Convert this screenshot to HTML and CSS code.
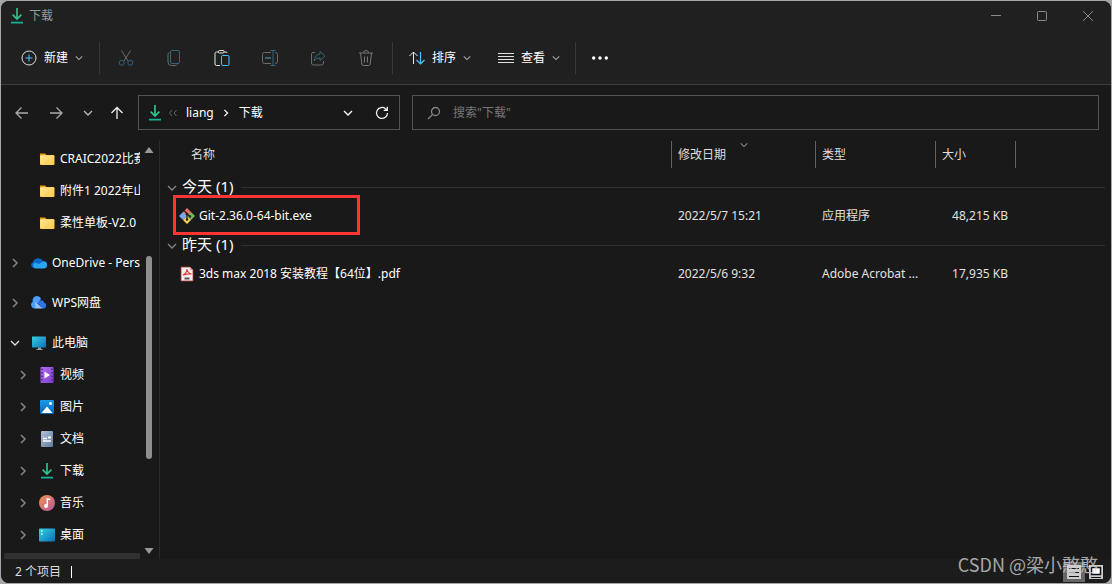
FILE: index.html
```html
<!DOCTYPE html>
<html lang="zh-CN">
<head>
<meta charset="utf-8">
<title>下载</title>
<link rel="stylesheet" href="styles.css">
</head>
<body>
<svg class="defs" aria-hidden="true">
  <defs>
    <linearGradient id="gold" x1="0" y1="0" x2="1" y2="1"><stop offset="0" stop-color="#ffe79c"/><stop offset="1" stop-color="#ffc843"/></linearGradient>
    <linearGradient id="screen" x1="0" y1="0" x2="1" y2="1"><stop offset="0" stop-color="#35d3e0"/><stop offset="1" stop-color="#0a6fb8"/></linearGradient>
    <linearGradient id="violet" x1="0" y1="0" x2="1" y2="1"><stop offset="0" stop-color="#b56cf0"/><stop offset="1" stop-color="#7d3fd0"/></linearGradient>
    <linearGradient id="sky" x1="0" y1="0" x2="0" y2="1"><stop offset="0" stop-color="#1c9be8"/><stop offset="1" stop-color="#0568b8"/></linearGradient>
    <linearGradient id="steel" x1="0" y1="0" x2="1" y2="1"><stop offset="0" stop-color="#b4c3d6"/><stop offset="1" stop-color="#5d7c9f"/></linearGradient>
    <linearGradient id="tune" x1="0" y1="0" x2="1" y2="1"><stop offset="0" stop-color="#f5924f"/><stop offset="1" stop-color="#b0589f"/></linearGradient>
    <symbol id="download" viewBox="0 0 16 16"><path d="M8 0v10.500M3.600 6.600 8 11l4.400-4.400" fill="none" stroke="#2fc08b" stroke-width="1.700"/><path d="M2 14.600h12" stroke="#19b093" stroke-width="1.800"/></symbol>
    <symbol id="folder" viewBox="0 0 16 16"><path d="M1 2.500h5l1.500 1.500H15v4H1z" fill="#e9a00c"/><rect x="1" y="4.300" width="14.500" height="9.700" rx="1" fill="url(#gold)"/></symbol>
    <symbol id="right" viewBox="0 0 10 10"><path d="m3 1 4 4-4 4" fill="none" stroke="currentColor" stroke-width="1.500"/></symbol>
    <symbol id="down" viewBox="0 0 10 10"><path d="m1 3 4 4 4-4" fill="none" stroke="currentColor" stroke-width="1.300"/></symbol>
  </defs>
</svg>
<div class="window">
  <header class="titlebar">
    <svg class="icon"><use href="#download"/></svg>
    <span class="title">下载</span>
    <button class="caption" aria-label="最小化"><svg class="tiny" viewBox="0 0 10 10"><path d="M0 4.500h10" stroke="currentColor"/></svg></button>
    <button class="caption" aria-label="最大化"><svg class="tiny" viewBox="0 0 10 10"><rect x=".5" y=".5" width="9" height="9" rx=".8" fill="none" stroke="currentColor"/></svg></button>
    <button class="caption" aria-label="关闭"><svg class="tiny" viewBox="0 0 10 10"><path d="m0 0 10 10M10 0 0 10" stroke="currentColor"/></svg></button>
  </header>

  <div class="toolbar">
    <button class="command">
      <svg class="icon" viewBox="0 0 16 16" fill="none"><circle cx="8" cy="8" r="7" stroke="#ddd"/><path d="M8 4.500v7M4.500 8h7" stroke="#4cc2ff"/></svg>
      新建<svg class="mini"><use href="#down"/></svg>
    </button>
    <div class="tools">
      <button class="tool" aria-label="剪切"><svg class="icon" viewBox="0 0 16 16" fill="none"><path d="m3.500.5 6.500 10.500M12.500.5 6 11" stroke="#6b6b6b"/><circle cx="3.700" cy="12.800" r="2.500" stroke="#35657d"/><circle cx="12.300" cy="12.800" r="2.500" stroke="#35657d"/></svg></button>
      <button class="tool" aria-label="复制"><svg class="icon" viewBox="0 0 16 16" fill="none"><path d="M3.500 2.500q-1.500.5-1.500 2V12q0 3.500 3.500 3.500h3.500q1.500 0 2-1" stroke="#6b6b6b"/><rect x="4.500" y=".5" width="9" height="13" rx="1.500" stroke="#35657d"/></svg></button>
      <button class="tool" aria-label="粘贴"><svg class="icon" viewBox="0 0 16 16" fill="none"><path d="M4.500 2H2.500q-1.500 0-1.500 1.500v10.500q0 1.500 1.500 1.500H6M10 2h2q1 0 1 1" stroke="#e8e8e8"/><rect x="4.500" y=".5" width="5.500" height="2.500" rx="1" stroke="#e8e8e8"/><rect x="7.500" y="5.500" width="7.500" height="10" rx="1.200" stroke="#4cc2ff"/></svg></button>
      <button class="tool" aria-label="重命名"><svg class="icon" viewBox="0 0 16 16" fill="none"><path d="M9 2.500H2.500Q.5 2.500.5 4.500v7q0 2 2 2H9M13 2.500h.5q2 0 2 2v7q0 2-2 2H13" stroke="#6b6b6b"/><path d="M11 .5v15M8.500.5h5M8.500 15.500h5" stroke="#35657d"/><path d="M3 8h6" stroke="#35657d" stroke-width="1.800"/></svg></button>
      <button class="tool" aria-label="共享"><svg class="icon" viewBox="0 0 16 16" fill="none"><path d="M5 2.500H3q-1.500 0-1.500 1.500v9q0 2 2 2h8q2 0 2-2v-2" stroke="#6b6b6b"/><path d="m10 1.500 5 4.500-5 4.500V8Q6.500 7.500 4 11q.5-6 6-7z" stroke="#35657d"/></svg></button>
      <button class="tool" aria-label="删除"><svg class="icon" viewBox="0 0 16 16" fill="none" stroke="#777"><path d="M1 3h14M5.500 2.500q0-2 2.500-2t2.500 2M2.500 3l1.300 11q.2 1.500 1.700 1.500h5q1.500 0 1.700-1.500L13.500 3M6.500 6.500v6M9.500 6.500v6"/></svg></button>
    </div>
    <div class="views">
      <button class="command"><svg class="icon" viewBox="0 0 16 16" fill="none"><path d="M4.500 14V2M.5 6l4-4 4 4" stroke="#e8e8e8"/><path d="M11.500 2v12M7.500 10l4 4 4-4" stroke="#4cc2ff" stroke-width="1.200"/></svg>排序<svg class="mini"><use href="#down"/></svg></button>
      <button class="command"><svg class="icon" viewBox="0 0 16 16"><path d="M0 3.500h16M0 6.500h16M0 9.500h16M0 12.500h16" stroke="#e0e0e0"/></svg>查看<svg class="mini"><use href="#down"/></svg></button>
    </div>
    <button class="tool more" aria-label="更多"><svg class="icon" viewBox="0 0 16 16" fill="#fff"><circle cx="1.700" cy="8" r="1.700"/><circle cx="8" cy="8" r="1.700"/><circle cx="14.300" cy="8" r="1.700"/></svg></button>
  </div>

  <div class="navbar">
    <div class="history">
      <button aria-label="后退"><svg class="arrow dim" viewBox="0 0 14 14"><path d="M13 7H1.500M6.500 1.500 1 7l5.500 5.500"/></svg></button>
      <button aria-label="前进"><svg class="arrow dim" viewBox="0 0 14 14"><path d="M1 7h11.500M7.500 1.500 13 7l-5.500 5.500"/></svg></button>
      <button class="narrow" aria-label="最近"><svg class="tiny"><use href="#down"/></svg></button>
      <button class="narrow" aria-label="上移"><svg class="arrow" viewBox="0 0 14 14"><path d="M7 13V1.500M1.500 7 7 1.500 12.500 7"/></svg></button>
    </div>
    <div class="address">
      <svg class="icon"><use href="#download"/></svg>
      <svg class="chevrons" viewBox="0 0 10 10"><path d="M4 2 1.500 5 4 8M8.500 2 6 5l2.500 3" fill="none" stroke="#666"/></svg>
      <a href="#liang">liang</a>
      <svg class="crumb"><use href="#right"/></svg>
      <a href="#downloads">下载</a>
      <button class="expand" aria-label="展开"><svg class="tiny"><use href="#down"/></svg></button>
      <button aria-label="刷新"><svg class="arrow" viewBox="0 0 14 14"><path d="M12.500 7A5.500 5.500 0 1 1 10.500 2.700L12 4.200M12.300.7v3.600H8.700"/></svg></button>
    </div>
    <label class="search">
      <svg class="arrow" viewBox="0 0 14 14"><circle cx="8.500" cy="5.500" r="4"/><path d="M5.500 8.500 1 13"/></svg>
      <input type="text" aria-label="搜索" placeholder='搜索"下载"'>
    </label>
  </div>

  <div class="body">
    <nav class="sidebar">
      <ul class="tree">
        <li class="child leaf"><svg class="icon"><use href="#folder"/></svg><span>CRAIC2022比赛</span></li>
        <li class="child leaf"><svg class="icon"><use href="#folder"/></svg><span>附件1 2022年山东</span></li>
        <li class="child leaf"><svg class="icon"><use href="#folder"/></svg><span>柔性单板-V2.0</span></li>
        <li class="root"><svg class="twist"><use href="#right"/></svg><svg class="icon" viewBox="0 0 16 16"><path d="M3 13a3 3 0 0 1-1-5.800A5.500 5.500 0 0 1 12 6a3.500 3.500 0 0 1 1 7z" fill="#0a66c8"/><path d="M4 13.500a3.300 3.300 0 0 1 0-6L8 9l4-2.500a3.500 3.500 0 0 1 1 7z" fill="#2aa5f2"/></svg><span>OneDrive - Personal</span></li>
        <li class="root"><svg class="twist"><use href="#right"/></svg><svg class="icon" viewBox="0 0 16 16"><path d="M3.500 13.500A3.700 3.700 0 0 1 1.800 6.700 4.300 4.300 0 0 1 10 4l-4 5-1 4.500z" fill="#4b9fff"/><path d="M4 6.500 12 13.500H4.500z" fill="#8dc4ff"/><path d="M6.500 8Q8.500 4.500 11.500 5.500a3.500 3.500 0 0 1 1.500 2 3.300 3.300 0 0 1 .5 6H12z" fill="#2c75ec"/></svg><span>WPS网盘</span></li>
        <li class="root"><svg class="twist open"><use href="#down"/></svg><svg class="icon" viewBox="0 0 16 16"><rect x="1" y="1.500" width="14" height="11" rx=".6" fill="url(#screen)"/><path d="M7 12.500h3v1.500h1.500v1h-6v-1H7z" fill="#9aa0a6"/></svg><span>此电脑</span></li>
        <li class="child"><svg class="twist"><use href="#right"/></svg><svg class="icon" viewBox="0 0 16 16"><rect x="1.500" width="13" height="16" rx="1" fill="url(#violet)"/><path d="M3 1.500v14M13 1.500v14" stroke="#4e2590" stroke-width="1.500" stroke-dasharray="1.500 2"/><path d="M5.500 4.500 11 8l-5.500 3.500z" fill="#fff"/></svg><span>视频</span></li>
        <li class="child"><svg class="twist"><use href="#right"/></svg><svg class="icon" viewBox="0 0 16 16"><rect x="1" y="1" width="14" height="14" rx="1" fill="url(#sky)"/><path d="M2.500 14 8 7.500l5.500 6.500z" fill="#fff"/><circle cx="11.500" cy="4.500" r="1.500" fill="#fff"/></svg><span>图片</span></li>
        <li class="child"><svg class="twist"><use href="#right"/></svg><svg class="icon" viewBox="0 0 16 16"><rect x="2" width="12" height="16" rx="1" fill="url(#steel)"/><path d="M4 7.500h4M4 10h8" stroke="#fff" stroke-width="1.300"/><path d="M9 5.500h3v2H9z" fill="#fff"/></svg><span>文档</span></li>
        <li class="child"><svg class="twist"><use href="#right"/></svg><svg class="icon"><use href="#download"/></svg><span>下载</span></li>
        <li class="child"><svg class="twist"><use href="#right"/></svg><svg class="icon" viewBox="0 0 16 16"><circle cx="8" cy="8" r="8" fill="url(#tune)"/><path d="M8.300 10.500V4l3 .5" fill="none" stroke="#fff" stroke-width="1.500"/><circle cx="7" cy="11" r="2" fill="#fff"/></svg><span>音乐</span></li>
        <li class="child"><svg class="twist"><use href="#right"/></svg><svg class="icon" viewBox="0 0 16 16"><rect y="1.500" width="16" height="13" rx=".8" fill="url(#screen)"/><path d="M2 4h1.500M2 7h1.500" stroke="#dff" stroke-width="1.500"/></svg><span>桌面</span></li>
        <li class="active"><svg class="icon" viewBox="0 0 16 16"><path d="M0 0h2.500v3H0zM3.500 0H6v3H3.500zM0 4h16v8H0z" fill="#2595d0"/></svg></li>
      </ul>
      <div class="scrollbar">
        <svg class="tiny" viewBox="0 0 10 10"><path d="m5 2 4.500 6h-9z"/></svg>
        <div class="track"><div class="thumb"></div></div>
        <svg class="tiny" viewBox="0 0 10 10"><path d="M5 8 .5 2h9z"/></svg>
      </div>
    </nav>

    <main class="files">
      <table>
        <colgroup><col class="c-name"><col class="c-date"><col class="c-type"><col class="c-size"><col></colgroup>
        <thead>
          <tr><th class="name">名称</th><th>修改日期<svg class="sort"><use href="#down"/></svg></th><th>类型</th><th>大小</th><td></td></tr>
        </thead>
        <tbody>
          <tr><th colspan="5"><div class="group"><svg class="twist"><use href="#down"/></svg><span>今天 (1)</span></div></th></tr>
          <tr>
            <td><div class="file marked"><svg class="icon" viewBox="0 0 16 16"><path d="M8 0 3.800 4.200 8 8.400l4.200-4.200z" fill="#ef6b6b"/><path d="M4 4 0 8l4 4 4-4z" fill="#78a8f0"/><path d="m12 4 4 4-4 4-4-4z" fill="#75bd53"/><path d="m8 8 4 4-4 4-4-4z" fill="#f2d45c"/><path d="m5 2.500 3 3v6M8 6l3 2.500" fill="none" stroke="#222" stroke-width="1.300"/><circle cx="8" cy="6" r="1.300" fill="#222"/><circle cx="11" cy="8.500" r="1.300" fill="#222"/><circle cx="8" cy="11.500" r="1.300" fill="#222"/></svg>Git-2.36.0-64-bit.exe</div></td>
            <td>2022/5/7 15:21</td><td>应用程序</td><td class="size">48,215 KB</td><td></td>
          </tr>
          <tr><th colspan="5"><div class="group"><svg class="twist"><use href="#down"/></svg><span>昨天 (1)</span></div></th></tr>
          <tr>
            <td><div class="file"><svg class="icon" viewBox="0 0 16 16"><path d="M2 1h9l3 3v11H2z" fill="#f4eeee" stroke="#a33" stroke-width=".8"/><path d="M11 1v3h3" fill="#d99"/><path d="M4 9q4-2 4-6 .5 4 4.500 5-4-.5-8.500 1z" fill="none" stroke="#e2352f" stroke-width="1.100"/><path d="M5.500 12.500h5" stroke="#555" stroke-width="2"/></svg>3ds max 2018 安装教程【64位】.pdf</div></td>
            <td>2022/5/6 9:32</td><td>Adobe Acrobat ...</td><td class="size">17,935 KB</td><td></td>
          </tr>
        </tbody>
      </table>
    </main>
  </div>

  <footer class="status">
    <span class="count">2 个项目</span>
    <button class="view on" aria-label="详细信息"><svg class="icon" viewBox="0 0 16 16"><path d="M1 1h14v14H1z" fill="#ccc"/><path d="M3 4.500h10M3 8.500h10M3 12.500h10" stroke="#111"/></svg></button>
    <button class="view" aria-label="大图标"><svg class="icon" viewBox="0 0 16 16"><path d="M1 1h14v14H1z" fill="#ccc"/><path d="M3.500 3.500h9v7h-9z" fill="#fff" stroke="#111" stroke-width="1.500"/><path d="M3 13.500h10" stroke="#111"/></svg></button>
  </footer>
  <div class="watermark">CSDN @梁小憨憨</div>
</div>
</body>
</html>
```
FILE: styles.css
```css
*, *::before, *::after { box-sizing: border-box; }
body {
  margin: 0;
  padding: 1px;
  height: 100vh;
  background: #a4a7a6;
  color: #fff;
  font: 12px/16px "Noto Sans", "Noto Sans CJK SC", sans-serif;
}
button { padding: 0; border: 0; background: none; color: inherit; font: inherit; display: flex; align-items: center; justify-content: center; }
a { color: inherit; text-decoration: none; }
svg { flex: none; display: block; }
.defs { position: absolute; width: 0; height: 0; }
.icon { width: 16px; height: 16px; }
.tiny { width: 10px; height: 10px; }
.mini { width: 8px; height: 8px; color: #aaa; }

.window { position: relative; height: 100%; display: flex; flex-direction: column; overflow: hidden; border-radius: 8px; background: #191919; }

.titlebar { display: flex; align-items: center; height: 29px; padding-left: 8px; background: #202020; color: #999; }
.title { flex: 1; padding-left: 4px; }
.caption { width: 46px; height: 29px; color: #8a8a8a; }

.toolbar { display: flex; align-items: center; height: 55px; padding: 2px 0 0 20px; background: #202020; border-bottom: 1px solid #3c3c3c; }
.command { gap: 7px; height: 32px; }
.tools { display: flex; height: 32px; margin-left: 16px; border-left: 1px solid #383838; border-right: 1px solid #383838; padding: 0 2px; }
.tool { width: 48px; height: 32px; }
.views { display: flex; gap: 27px; padding: 0 15px 0 16px; border-right: 1px solid #383838; }

.navbar { display: flex; align-items: center; gap: 12px; height: 55px; padding: 0 12px 0 4px; }
.history { display: flex; width: 121px; }
.history button { flex: none; width: 34px; height: 32px; color: #bbb; }
.history .narrow { width: 29px; }
.arrow { width: 14px; height: 14px; fill: none; stroke: #f0f0f0; stroke-width: 1.3; }
.dim { stroke: #aaa; }
.address { display: flex; align-items: center; width: 262px; height: 35px; padding-left: 8px; border: 1px solid #535353; }
.chevrons { width: 10px; height: 10px; margin: 0 8px 0 5px; }
.crumb { width: 8px; height: 8px; margin: 0 9px 0 8px; }
.address button { width: 34px; height: 32px; }
.address .expand { margin-left: auto; }
.search { display: flex; align-items: center; gap: 12px; flex: 1; height: 35px; padding-left: 14px; border: 1px solid #535353; }
.search .arrow { stroke: #858585; }
.search input { flex: 1; border: 0; outline: 0; padding: 0; background: none; color: #fff; font: inherit; }
.search input::placeholder { color: #777; }

.body { flex: 1; min-height: 0; display: flex; }
.sidebar { display: flex; width: 159px; border-right: 1px solid #2b2b2b; }
.tree { flex: 1; min-width: 0; margin: 0; padding: 3px 0 0 3px; list-style: none; overflow: hidden; }
.tree li { display: flex; align-items: center; height: 32px; white-space: nowrap; padding-left: 6px; }
.tree span { padding-left: 5px; }
.tree .root { margin-top: 8px; }
.tree .child { padding-left: 14px; }
.tree .leaf { padding-left: 35px; }
.tree .active { align-items: flex-start; margin-top: 2px; padding: 6px 0 0 35px; background: #303030; }
.twist { width: 10px; height: 10px; color: #858585; }
.tree .twist { margin-right: 11px; }
.tree .open { color: #ddd; }
.scrollbar { display: flex; flex-direction: column; align-items: center; width: 19px; padding: 5px 1px 3px 0; fill: #999; }
.track { flex: 1; width: 6px; display: flex; flex-direction: column; padding: 101px 0 87px; }
.thumb { flex: 1; border-radius: 3px; background: #8f8f8f; }

.files { flex: 1; min-width: 0; padding: 1px 6px 0 0; }
table { width: 100%; table-layout: fixed; border-spacing: 0; }
.c-name { width: 512px; }
.c-date { width: 144px; }
.c-type { width: 120px; }
.c-size { width: 80px; }
th, td { padding: 0 0 0 6px; font-weight: normal; text-align: left; height: 29px; white-space: nowrap; }
td { color: #e0e0e0; }
thead th, thead td { height: 27px; }
thead th { position: relative; color: #dedede; border-right: 1px solid #636363; }
thead .name { padding-left: 31px; }
tbody::before { content: ""; display: block; height: 5px; }
.sort { position: absolute; top: 0; left: calc(50% - 4px); width: 8px; height: 8px; color: #888; }
tbody th { padding: 0; }
tbody td { padding-bottom: 2px; }
.group { display: flex; align-items: center; gap: 5px; padding-left: 7px; font-size: 15px; line-height: 20px; }
.group span { padding-bottom: 3px; }
.group::after { content: ""; flex: 1; height: 1px; margin-left: 3px; background: #303030; }
.file { position: relative; display: flex; align-items: center; gap: 4px; padding-left: 13px; color: #fff; }
.marked::before { content: ""; position: absolute; left: 7px; top: -13px; width: 187px; height: 40px; border: 3px solid #fa3534; }
.size { text-align: right; padding-right: 8px; }

.status { display: flex; align-items: center; height: 24px; padding: 2px 4px 0 14px; background: #1c1c1c; }
.count { margin-right: auto; padding-right: 10px; border-right: 1px solid #fff; line-height: 12px; color: #ddd; }
.view { width: 22px; height: 20px; }
.view.on { background: #666; }
.watermark { position: absolute; right: 13px; bottom: 7px; font: 18px/24px "Noto Sans CJK SC", sans-serif; color: rgba(205, 205, 205, .8); pointer-events: none; }
```
